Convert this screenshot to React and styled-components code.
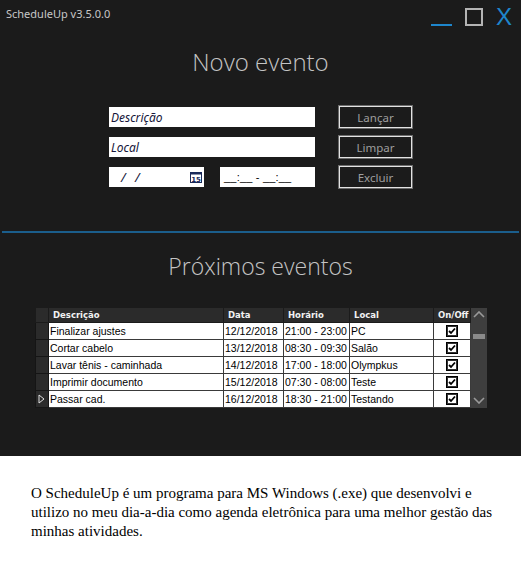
import React from 'react';
import styled, { createGlobalStyle } from 'styled-components';

const GlobalStyle = createGlobalStyle`
  body {
    margin: 0;
    background: #ffffff;
  }
`;

const Panel = styled.div`
  background: #1b1b1b;
  height: 456px;
  display: flex;
  flex-direction: column;
  font-family: "Noto Sans", "Open Sans", sans-serif;
`;

const TitleBar = styled.div`
  display: flex;
  justify-content: space-between;
  align-items: flex-start;
  height: 40px;
`;

const AppTitle = styled.div`
  color: #c8c8c8;
  font-size: 11px;
  padding: 6px 0 0 6px;
`;

const Controls = styled.div`
  display: flex;
  align-items: flex-end;
  gap: 13px;
  padding: 7px 9px 0 0;
`;

const Minimize = styled.div`
  width: 21px;
  height: 2px;
  background: #1e86cc;
`;

const Maximize = styled.div`
  width: 14px;
  height: 14px;
  border: 2px solid #b4b4b4;
  box-sizing: content-box;
`;

const Close = styled.div`
  color: #1e86cc;
  font-family: "Liberation Sans", sans-serif;
  font-size: 24px;
  line-height: 20px;
  height: 19px;
`;

const Heading = styled.h1`
  margin: ${(p) => p.$margin};
  text-align: center;
  color: #c4c4c4;
  font-family: "Open Sans", sans-serif;
  font-weight: 300;
  font-size: ${(p) => p.$size || '23px'};
  line-height: 30px;
`;

const Form = styled.div`
  display: flex;
  gap: 23px;
  margin: 28px 0 0 109px;
`;

const Fields = styled.div`
  display: flex;
  flex-direction: column;
  gap: 10px;
  width: 206px;
  padding-top: 2px;
`;

const FieldRow = styled.div`
  display: flex;
  justify-content: space-between;
`;

const TextBox = styled.div`
  background: #ffffff;
  height: 20px;
  width: ${(p) => p.$width || '206px'};
  box-sizing: border-box;
  display: flex;
  align-items: center;
  padding: 0 2px;
  font-size: 12px;
  font-style: ${(p) => (p.$italic ? 'italic' : 'normal')};
  color: #15153a;
`;

const DateText = styled.span`
  flex: 1;
  padding-left: 10px;
  word-spacing: 6px;
  font-size: 13px;
  font-style: italic;
`;

const TimeText = styled.span`
  font-family: "Liberation Sans", sans-serif;
  font-size: 11px;
  color: #000;
  letter-spacing: 0.2px;
  padding-left: 2px;
`;

const Buttons = styled.div`
  display: flex;
  flex-direction: column;
  gap: 6px;
`;

const Button = styled.button`
  width: 75px;
  height: 24px;
  background: #1b1b1b;
  border: 2px solid #e2e2e2;
  outline: 1px solid #6a6a6a;
  outline-offset: -1px;
  color: #9e9e9e;
  font-family: "Noto Sans", sans-serif;
  font-size: 11.5px;
  padding: 0;
`;

const Divider = styled.div`
  height: 2px;
  background: #1b5e8c;
  margin: 42px 2px 0 2px;
`;

const TableArea = styled.div`
  display: flex;
  margin: 27px 0 0 35px;
`;

const Grid = styled.table`
  border-collapse: collapse;
  table-layout: fixed;
  width: 435px;
  font-family: "Liberation Sans", sans-serif;
  font-size: 10.5px;
`;

const HeadCell = styled.th`
  background: #2b2b2b;
  color: #f2f2f2;
  font-family: "DejaVu Sans", sans-serif;
  font-size: 8.5px;
  font-weight: bold;
  text-align: ${(p) => p.$align || 'left'};
  height: 14px;
  padding: 0 4px;
  border: 1px solid #1b1b1b;
  border-top: none;
`;

const RowHead = styled.td`
  background: #2b2b2b;
  border: 1px solid #151515;
  padding: 0;
  height: 16px;
  vertical-align: middle;
`;

const Cell = styled.td`
  background: #ffffff;
  color: #000;
  border: 1px solid #3a3a3a;
  padding: 0 1px;
  height: 16px;
  white-space: nowrap;
  overflow: hidden;
  text-align: ${(p) => p.$align || 'left'};
  line-height: 14px;
`;

const Scrollbar = styled.div`
  width: 16px;
  background: #3e3e3e;
  display: flex;
  flex-direction: column;
  align-items: center;
  justify-content: space-between;
  padding: 3px 0 4px;
  box-sizing: border-box;
`;

const Thumb = styled.div`
  width: 12px;
  height: 5px;
  background: #8a8a8a;
  margin-top: 16px;
`;

const Spacer = styled.div`
  flex: 1;
`;

const Caption = styled.p`
  margin: 0;
  padding: 28px 22px 0 31px;
  font-family: "Liberation Serif", serif;
  font-size: 15px;
  line-height: 19px;
  color: #000;
`;

const CalendarIcon = () => (
  <svg width="12" height="11" viewBox="0 0 12 11">
    <rect x="0.5" y="0.5" width="11" height="10" fill="#fff" stroke="#1a2a5a" />
    <rect x="0.5" y="0.5" width="11" height="2" fill="#1a2a5a" />
    <text x="6" y="9.6" fontSize="7" fontFamily="DejaVu Sans" fontWeight="bold" textAnchor="middle" fill="#1a2a5a">15</text>
  </svg>
);

const Check = () => (
  <svg width="12" height="12" viewBox="0 0 12 12" style={{ display: 'block', margin: '0 auto' }}>
    <rect x="0.5" y="0.5" width="11" height="11" fill="#fff" stroke="#000" />
    <rect x="1.5" y="1.5" width="9" height="9" fill="none" stroke="#333" />
    <path d="M3 6 L5 8 L9 3.5" fill="none" stroke="#000" strokeWidth="1.8" />
  </svg>
);

const Pointer = () => (
  <svg width="8" height="10" viewBox="0 0 8 10" style={{ display: 'block', marginLeft: 2 }}>
    <path d="M1 1 L6 5 L1 9 Z" fill="#2b2b2b" stroke="#e0e0e0" strokeWidth="1" />
  </svg>
);

const Chevron = ({ up }) => (
  <svg width="12" height="7" viewBox="0 0 12 7">
    <path d={up ? 'M1 6 L6 1 L11 6' : 'M1 1 L6 6 L11 1'} fill="none" stroke="#9a9a9a" strokeWidth="1.6" />
  </svg>
);

const events = [
  { desc: 'Finalizar ajustes', date: '12/12/2018', time: '21:00 - 23:00', place: 'PC' },
  { desc: 'Cortar cabelo', date: '13/12/2018', time: '08:30 - 09:30', place: 'Salão' },
  { desc: 'Lavar tênis - caminhada', date: '14/12/2018', time: '17:00 - 18:00', place: 'Olympkus' },
  { desc: 'Imprimir documento', date: '15/12/2018', time: '07:30 - 08:00', place: 'Teste' },
  { desc: 'Passar cad.', date: '16/12/2018', time: '18:30 - 21:00', place: 'Testando' },
];

export default function App() {
  return (
    <>
      <GlobalStyle />
      <Panel>
        <TitleBar>
          <AppTitle>ScheduleUp v3.5.0.0</AppTitle>
          <Controls>
            <Minimize />
            <Maximize />
            <Close>X</Close>
          </Controls>
        </TitleBar>

        <Heading $margin="7px 0 0 0" $size="24px">Novo evento</Heading>

        <Form>
          <Fields>
            <TextBox $italic>Descrição</TextBox>
            <TextBox $italic>Local</TextBox>
            <FieldRow>
              <TextBox $width="95px">
                <DateText>/ /</DateText>
                <CalendarIcon />
              </TextBox>
              <TextBox $width="95px">
                <TimeText>__:__ - __:__</TimeText>
              </TextBox>
            </FieldRow>
          </Fields>
          <Buttons>
            <Button>Lançar</Button>
            <Button>Limpar</Button>
            <Button>Excluir</Button>
          </Buttons>
        </Form>

        <Divider />

        <Heading $margin="18px 0 0 0">Próximos eventos</Heading>

        <TableArea>
          <Grid>
            <colgroup>
              <col style={{ width: 13 }} />
              <col style={{ width: 175 }} />
              <col style={{ width: 60 }} />
              <col style={{ width: 66 }} />
              <col style={{ width: 84 }} />
              <col style={{ width: 37 }} />
            </colgroup>
            <thead>
              <tr>
                <HeadCell />
                <HeadCell>Descrição</HeadCell>
                <HeadCell>Data</HeadCell>
                <HeadCell>Horário</HeadCell>
                <HeadCell>Local</HeadCell>
                <HeadCell $align="right">On/Off</HeadCell>
              </tr>
            </thead>
            <tbody>
              {events.map((e, i) => (
                <tr key={e.date}>
                  <RowHead>{i === events.length - 1 && <Pointer />}</RowHead>
                  <Cell>{e.desc}</Cell>
                  <Cell>{e.date}</Cell>
                  <Cell>{e.time}</Cell>
                  <Cell>{e.place}</Cell>
                  <Cell $align="center"><Check /></Cell>
                </tr>
              ))}
            </tbody>
          </Grid>
          <Scrollbar>
            <Chevron up />
            <Thumb />
            <Spacer />
            <Chevron />
          </Scrollbar>
        </TableArea>
      </Panel>

      <Caption>
        O ScheduleUp é um programa para MS Windows (.exe) que desenvolvi e utilizo no meu dia-a-dia
        como agenda eletrônica para uma melhor gestão das minhas atividades.
      </Caption>
    </>
  );
}
